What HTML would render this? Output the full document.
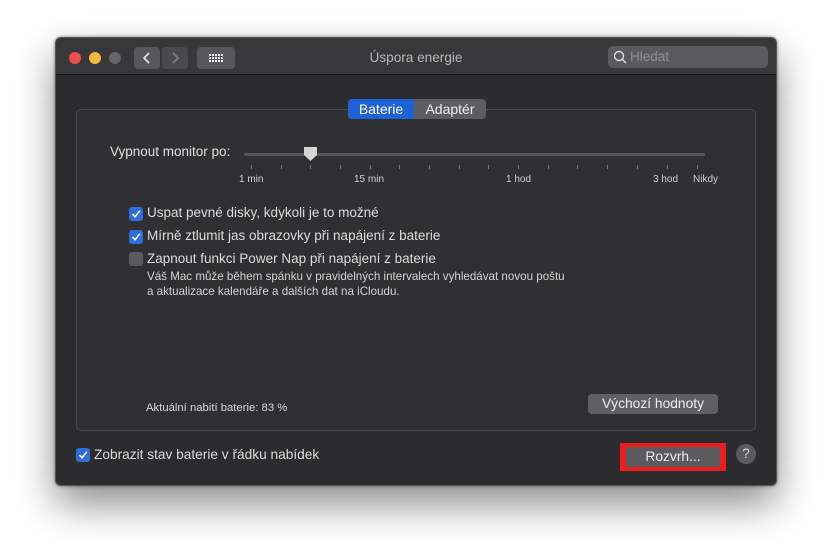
<!DOCTYPE html>
<html><head><meta charset="utf-8"><style>
*{margin:0;padding:0;box-sizing:border-box}
body{width:832px;height:559px;background:#fff;position:relative;overflow:hidden;font-family:"Liberation Sans","DejaVu Sans",sans-serif;color:#dcdcdc}
.a{position:absolute}
.win{left:55px;top:37px;width:722px;height:449px;background:#2c2c2e;border-radius:6px;border:1px solid #555;box-shadow:0 18px 40px rgba(0,0,0,.45),0 0 3px rgba(0,0,0,.5);overflow:hidden}
.tb{left:0;top:0;width:720px;height:37px;background:#38383a;border-bottom:1px solid #141414}
.dot{width:12px;height:12px;border-radius:50%}
.btn{background:#58585b;border-radius:4px}
.cb{width:14px;height:14px;border-radius:3px;background:#2d6fe0}
.cb svg{position:absolute;left:2px;top:2px}
.t13{font-size:13.5px}
.tick{width:1px;height:4px;background:#777;top:165px}
.lbl{font-size:10px;color:#d0d0d0;top:174px}
</style></head><body>
<div class="a win">
 <div class="a tb">
  <div class="a dot" style="left:13px;top:14px;background:#ee4e4a"></div>
  <div class="a dot" style="left:33px;top:14px;background:#f4b83a"></div>
  <div class="a dot" style="left:53px;top:14px;background:#666668"></div>
  <div class="a btn" style="left:78px;top:9px;width:26px;height:22px"><svg width="26" height="22"><path d="M15 6 L10 11 L15 16" stroke="#e8e8e8" stroke-width="1.6" fill="none"/></svg></div>
  <div class="a btn" style="left:106px;top:9px;width:26px;height:22px;background:#4a4a4d"><svg width="26" height="22"><path d="M11 6 L16 11 L11 16" stroke="#808080" stroke-width="1.6" fill="none"/></svg></div>
  <div class="a btn" style="left:141px;top:9px;width:38px;height:22px"><svg width="38" height="22">
   <g fill="#eee"><rect x="12" y="7" width="2" height="2"/><rect x="15" y="7" width="2" height="2"/><rect x="18" y="7" width="2" height="2"/><rect x="21" y="7" width="2" height="2"/><rect x="24" y="7" width="2" height="2"/>
   <rect x="12" y="10" width="2" height="2"/><rect x="15" y="10" width="2" height="2"/><rect x="18" y="10" width="2" height="2"/><rect x="21" y="10" width="2" height="2"/><rect x="24" y="10" width="2" height="2"/>
   <rect x="12" y="13" width="2" height="2"/><rect x="15" y="13" width="2" height="2"/><rect x="18" y="13" width="2" height="2"/><rect x="21" y="13" width="2" height="2"/><rect x="24" y="13" width="2" height="2"/></g></svg></div>
  <div class="a" style="left:0;width:720px;top:12px;text-align:center;color:#b8b8b8;font-size:13.6px">Úspora energie</div>
  <div class="a" style="left:552px;top:8px;width:160px;height:22px;background:#5a5a5d;border-radius:5px">
   <svg class="a" style="left:5px;top:4px" width="14" height="14"><circle cx="6" cy="6" r="4.5" stroke="#ddd" stroke-width="1.4" fill="none"/><path d="M9.3 9.3 L13 13" stroke="#ddd" stroke-width="1.5"/></svg>
   <div class="a t13" style="left:22px;top:3px;color:#8e8e90">Hledat</div>
  </div>
 </div>
 <div class="a" style="left:20px;top:71px;width:680px;height:322px;border:1px solid #4a4a4c;border-radius:5px;background:#303032"></div>
 <div class="a" style="left:292px;top:61px;width:138px;height:20px;border-radius:4px;background:#5d5d60;overflow:hidden">
  <div class="a" style="left:0;top:0;width:66px;height:20px;background:#1f62d6"></div>
  <div class="a" style="left:0;width:66px;top:2px;text-align:center;color:#fff;font-size:14px">Baterie</div>
  <div class="a" style="left:66px;width:72px;top:2px;text-align:center;color:#eee;font-size:14px">Adaptér</div>
 </div>
</div>
<div class="a t13" style="left:110px;top:144px;color:#e0e0e0">Vypnout monitor po:</div>
<div class="a" style="left:244px;top:153px;width:461px;height:3px;background:#555558;border-radius:2px"></div>
<svg class="a" style="left:302px;top:146px" width="17" height="17"><path d="M2 1 H15 V9 L8.5 15 L2 9 Z" fill="#d6d6d6"/></svg>
<div class="a tick" style="left:251px"></div><div class="a tick" style="left:281px"></div><div class="a tick" style="left:310px"></div><div class="a tick" style="left:340px"></div><div class="a tick" style="left:370px"></div><div class="a tick" style="left:399px"></div><div class="a tick" style="left:429px"></div><div class="a tick" style="left:459px"></div><div class="a tick" style="left:488px"></div><div class="a tick" style="left:518px"></div><div class="a tick" style="left:548px"></div><div class="a tick" style="left:577px"></div><div class="a tick" style="left:607px"></div><div class="a tick" style="left:637px"></div><div class="a tick" style="left:667px"></div><div class="a tick" style="left:697px"></div>
<div class="a lbl" style="left:239px">1 min</div>
<div class="a lbl" style="left:354px">15 min</div>
<div class="a lbl" style="left:506px">1 hod</div>
<div class="a lbl" style="left:653px">3 hod</div>
<div class="a lbl" style="left:693px">Nikdy</div>

<div class="a cb" style="left:129px;top:207px"><svg width="10" height="10"><path d="M1.5 5 L4 7.8 L8.8 1.8" stroke="#fff" stroke-width="1.6" fill="none"/></svg></div>
<div class="a t13" style="left:147px;top:205px">Uspat pevné disky, kdykoli je to možné</div>
<div class="a cb" style="left:129px;top:230px"><svg width="10" height="10"><path d="M1.5 5 L4 7.8 L8.8 1.8" stroke="#fff" stroke-width="1.6" fill="none"/></svg></div>
<div class="a t13" style="left:147px;top:228px">Mírně ztlumit jas obrazovky při napájení z baterie</div>
<div class="a cb" style="left:129px;top:252px;background:#5a5a5c"></div>
<div class="a t13" style="left:147px;top:251px">Zapnout funkci Power Nap při napájení z baterie</div>
<div class="a" style="left:147px;top:269px;font-size:11.6px;line-height:15px;color:#d4d4d4">Váš Mac může během spánku v pravidelných intervalech vyhledávat novou poštu<br>a aktualizace kalendáře a dalších dat na iCloudu.</div>
<div class="a" style="left:146px;top:402px;font-size:11.3px;color:#d8d8d8">Aktuální nabití baterie: 83 %</div>
<div class="a" style="left:588px;top:394px;width:130px;height:20px;background:#606063;border-radius:4px;text-align:center;line-height:20px;color:#eee;font-size:13.8px">Výchozí hodnoty</div>

<div class="a cb" style="left:76px;top:448px"><svg width="10" height="10"><path d="M1.5 5 L4 7.8 L8.8 1.8" stroke="#fff" stroke-width="1.6" fill="none"/></svg></div>
<div class="a" style="left:94px;top:447px;font-size:13.7px">Zobrazit stav baterie v řádku nabídek</div>
<div class="a" style="left:620px;top:443px;width:106px;height:28px;background:#ee1c1c"></div>
<div class="a" style="left:626px;top:447px;width:94px;height:20px;background:#5b5b5e;text-align:center;line-height:20px;color:#eee;font-size:13.8px">Rozvrh...</div>
<div class="a t13" style="left:736px;top:444px;width:20px;height:20px;border-radius:50%;background:#5b5b5e;text-align:center;line-height:20px;color:#ddd">?</div>
</body></html>
